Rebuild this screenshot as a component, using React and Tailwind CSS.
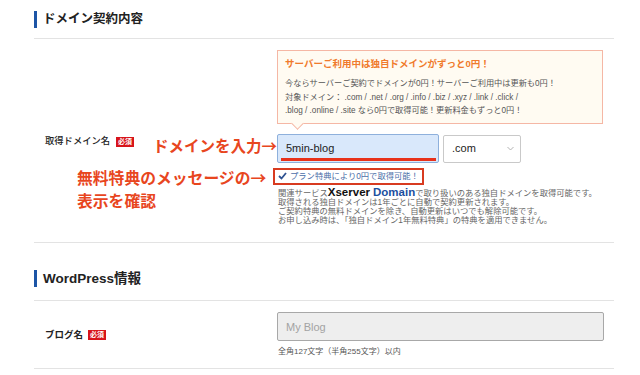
import React from 'react';

function Badge() {
  return (
    <span className="inline-flex h-[10px] items-center bg-[#d7141a] px-[2px] text-[7px] font-bold leading-none text-white">
      必須
    </span>
  );
}

function SectionTitle({ children, className }) {
  return (
    <div className={`border-b border-[#e3e3e3] ${className}`}>
      <div className="flex h-[17px] items-center border-l-[3px] border-[#1d55a6] pl-[6px] text-[12.5px] font-semibold leading-none text-[#222]">
        {children}
      </div>
    </div>
  );
}

export default function App() {
  return (
    <div className="h-[375px] w-[640px] overflow-hidden bg-white pl-[34px] pr-[26px] font-['Liberation_Sans','Noto_Sans_CJK_JP',sans-serif] text-[#222]">
      <SectionTitle className="pt-[11px] pb-[10px]">ドメイン契約内容</SectionTitle>

      {/* domain row */}
      <div className="relative flex items-center border-b border-[#e3e3e3] pt-[11px] pb-[17px]">
        <div className="mt-[8px] flex w-[243px] items-center gap-[6px] pl-[11px]">
          <span className="text-[9.3px] font-medium leading-none">取得ドメイン名</span>
          <Badge />
        </div>

        <div className="w-[327px]">
          <div className="relative w-[326px] border border-[#f5b7a5] bg-[#fffbf2] px-[7px] pt-[6px] pb-[5px]">
            <p className="text-[9.5px] font-bold leading-[14px] text-[#f07a2c]">
              サーバーご利用中は独自ドメインがずっと0円！
            </p>
            <p className="mt-[6px] text-[8.2px] leading-[13.5px] text-[#555]">
              今ならサーバーご契約でドメインが0円！サーバーご利用中は更新も0円！
              <br />
              対象ドメイン： .com / .net / .org / .info / .biz / .xyz / .link / .click /
              <br />
              .blog / .online / .site なら0円で取得可能！更新料金もずっと0円！
            </p>
            <span className="absolute -bottom-[5px] left-[15px] h-[9px] w-[9px] rotate-45 border-r border-b border-[#f5b7a5] bg-[#fffbf2]" />
          </div>

          <div className="mt-[10px] flex gap-[4px]">
            <div className="relative flex h-[29px] w-[162px] items-center rounded-[2px] border border-[#8eb0dc] bg-[#d9e8fb] pl-[8px] text-[11px] text-[#222]">
              5min-blog
              <span className="absolute top-[23px] left-[3px] h-[3px] w-[155px] bg-[#e8311a]" />
            </div>
            <div className="mt-[1px] flex h-[28px] w-[78px] items-center justify-between rounded-[2px] border border-[#c9c9c9] bg-white pl-[8px] pr-[6px] text-[11px]">
              .com
              <svg width="7" height="5" viewBox="0 0 7 5">
                <polyline points="0.5,1 3.5,4 6.5,1" fill="none" stroke="#aaa" strokeWidth="0.9" />
              </svg>
            </div>
          </div>

          <div className="-ml-[4px] mt-[5px] flex h-[17px] w-[151px] items-center gap-[3px] whitespace-nowrap border-2 border-[#d83b20] pl-[3px] text-[8.3px] leading-none text-[#4b6ea8]">
            <svg width="9" height="8" viewBox="0 0 9 8" className="shrink-0">
              <polyline points="1,4 3.5,6.5 8,1" fill="none" stroke="#2f5291" strokeWidth="1.8" />
            </svg>
            プラン特典により0円で取得可能！
          </div>

          <div className="mt-[3px] pl-[1px] text-[8.3px] leading-[9.2px] text-[#666]">
            <p>
              関連サービス
              <span className="text-[11.5px] font-bold leading-[9px] text-[#111]">Xserver</span>
              <span className="ml-[3px] text-[11.5px] font-bold leading-[9px] text-[#1b4fa0]">Domain</span>
              で取り扱いのある独自ドメインを取得可能です。
            </p>
            <p>取得される独自ドメインは1年ごとに自動で契約更新されます。</p>
            <p>ご契約特典の無料ドメインを除き、自動更新はいつでも解除可能です。</p>
            <p>お申し込み時は、「独自ドメイン1年無料特典」の特典を適用できません。</p>
          </div>
        </div>

        {/* annotations */}
        <span className="absolute top-[98px] left-[119px] whitespace-nowrap font-['Noto_Sans_CJK_JP',sans-serif] text-[15.5px] font-bold leading-[16px] text-[#e8461e]">
          ドメインを入力→
        </span>
        <div className="absolute top-[127px] left-[43px] whitespace-nowrap font-['Noto_Sans_CJK_JP',sans-serif] text-[15.8px] font-bold leading-[23px] text-[#e8461e]">
          無料特典のメッセージの→
          <br />
          表示を確認
        </div>
      </div>

      <SectionTitle className="pt-[27px] pb-[13px]">
        <span className="text-[13.5px] font-bold">WordPress情報</span>
      </SectionTitle>

      {/* blog name row */}
      <div className="flex items-center border-b border-[#e3e3e3] pt-[11px] pb-[11px]">
        <div className="flex w-[243px] items-center gap-[5px] pl-[11px]">
          <span className="text-[9.5px] font-bold leading-none">ブログ名</span>
          <Badge />
        </div>
        <div>
          <div className="flex h-[29px] w-[327px] items-center rounded-[2px] border border-[#a8a8a8] bg-[#eeeeee] pl-[8px] text-[11px] text-[#a3a3a3]">
            My Blog
          </div>
          <p className="mt-[6px] pl-[1px] text-[8px] leading-[10px] text-[#555]">全角127文字（半角255文字）以内</p>
        </div>
      </div>
    </div>
  );
}
